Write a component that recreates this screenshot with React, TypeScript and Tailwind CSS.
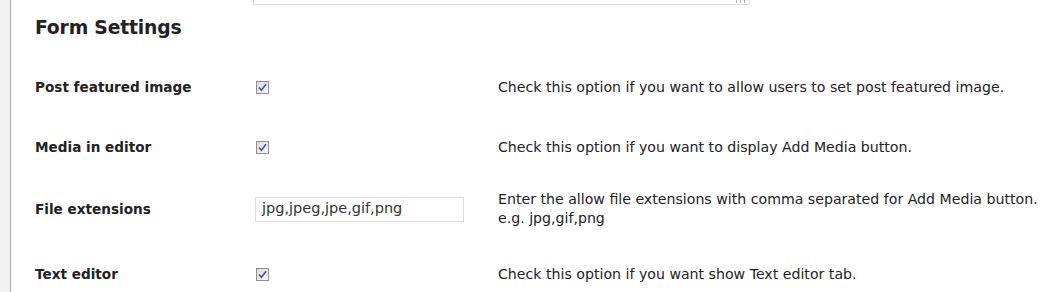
import React from "react";

const ROWS = [
  {
    label: "Post featured image",
    kind: "check",
    desc: ["Check this option if you want to allow users to set post featured image."],
    h: "h-[60px]",
  },
  {
    label: "Media in editor",
    kind: "check",
    desc: ["Check this option if you want to display Add Media button."],
    h: "h-[60px]",
  },
  {
    label: "File extensions",
    kind: "text",
    desc: [
      "Enter the allow file extensions with comma separated for Add Media button.",
      "e.g. jpg,gif,png",
    ],
    h: "h-[64px]",
  },
  {
    label: "Text editor",
    kind: "check",
    desc: ["Check this option if you want show Text editor tab."],
    h: "h-[66px]",
  },
];

function CheckBox() {
  return (
    <span className="ml-[1px] flex h-[13px] w-[13px] items-center justify-center border border-[#8f8f8f] bg-gradient-to-br from-[#dcdcdc] to-[#f8f8f8]">
      <svg width="9" height="9" viewBox="0 0 9 9">
        <path d="M1 4.5 L3.4 7.2 L8 1.2" fill="none" stroke="#3d55a8" strokeWidth="1.6" />
      </svg>
    </span>
  );
}

export default function App() {
  return (
    <div
      className="flex h-[292px] w-[1051px] overflow-hidden bg-white text-[#222]"
      style={{ fontFamily: '"DejaVu Sans", Verdana, sans-serif' }}
    >
      <div className="w-[11px] shrink-0 border-r border-[#aaa] bg-[#f1f1f1]" />
      <div className="flex-1">
        {/* bottom of the textarea above, with its resize grip */}
        <div className="ml-[242px] flex h-[5px] w-[497px] items-end justify-end border-x border-b border-[#dcdcdc] pr-[4px]">
          <svg width="9" height="3" viewBox="0 0 9 3" className="mb-[1px]">
            <rect x="0" y="0" width="1" height="3" fill="#b5b5b5" />
            <rect x="4" y="0" width="1" height="3" fill="#b5b5b5" />
            <rect x="8" y="0" width="1" height="3" fill="#b5b5b5" />
          </svg>
        </div>
        <h2 className="mt-[12px] pl-[24px] text-[18.8px] font-bold leading-[22px] tracking-[-0.2px]">
          Form Settings
        </h2>
        <div className="mt-[18px]">
          {ROWS.map((row) => (
            <div key={row.label} className={`flex items-center ${row.h}`}>
              <div className="w-[244px] shrink-0 pl-[24px] text-[13.6px] font-bold">
                {row.label}
              </div>
              <div className="w-[243px] shrink-0">
                {row.kind === "check" ? (
                  <CheckBox />
                ) : (
                  <div className="flex h-[25px] w-[209px] items-center border border-[#dddddd] px-[6px] text-[14.5px] text-[#333]">
                    jpg,jpeg,jpe,gif,png
                  </div>
                )}
              </div>
              <div className="text-[14.15px] leading-[19px] text-[#222]">
                {row.desc.map((d) => (
                  <div key={d}>{d}</div>
                ))}
              </div>
            </div>
          ))}
        </div>
      </div>
    </div>
  );
}
